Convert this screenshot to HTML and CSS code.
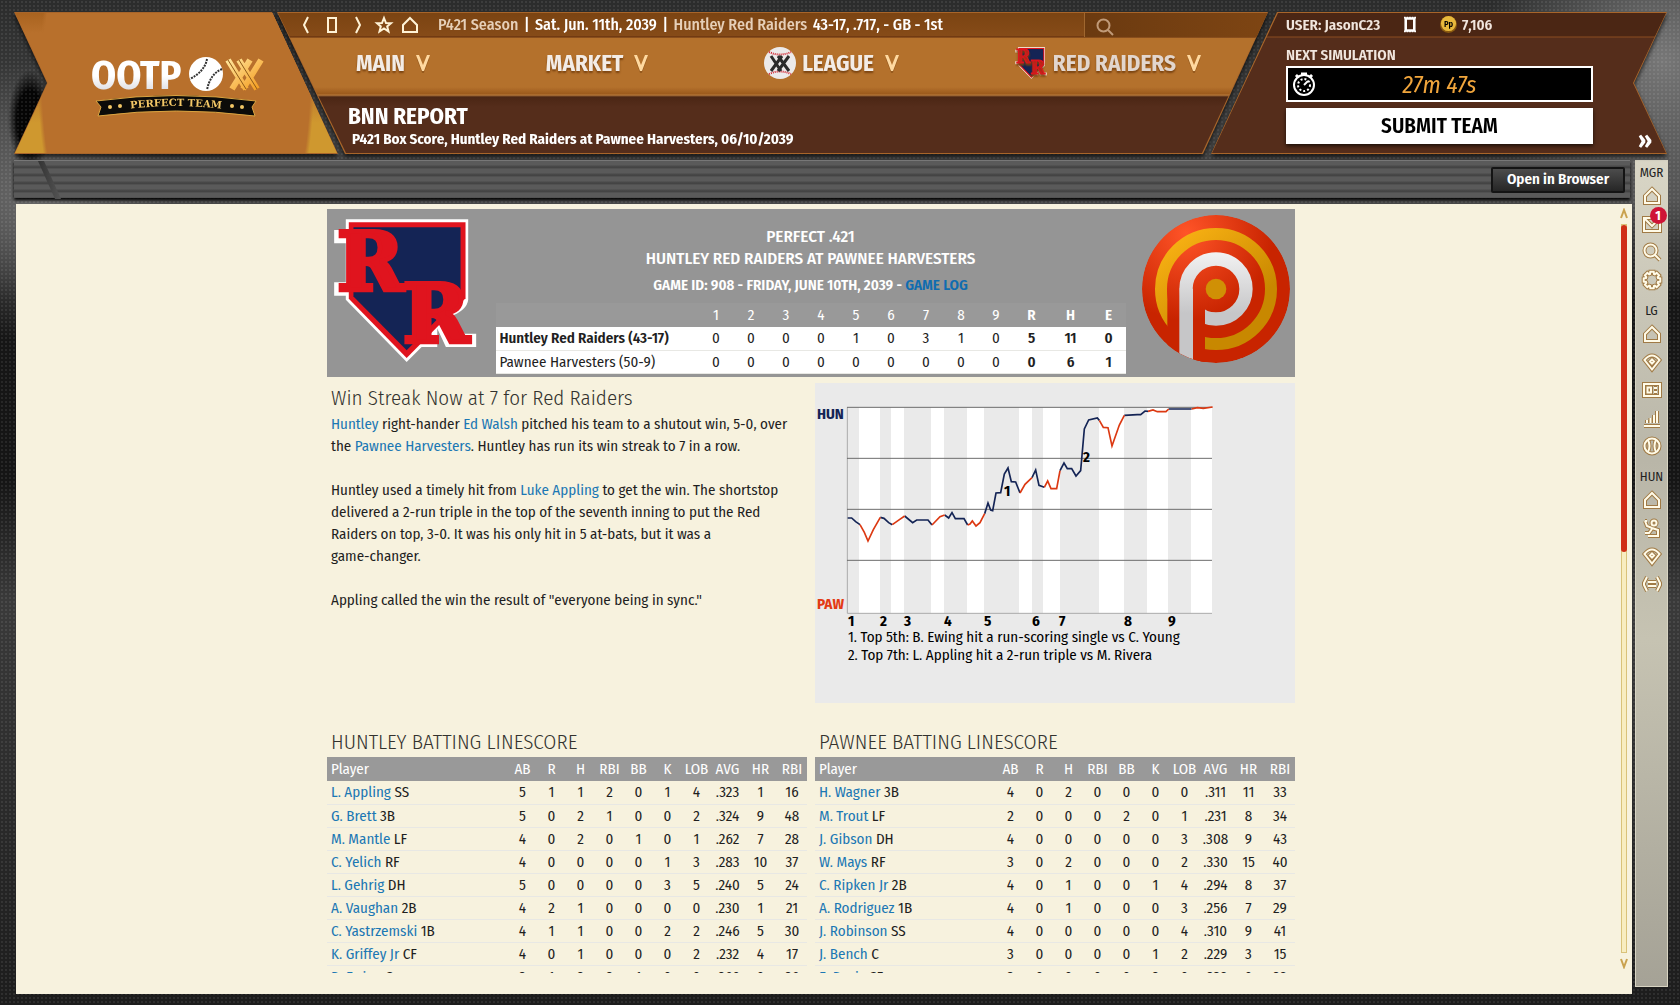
FILE: index.html
```
<!DOCTYPE html>
<html lang="en">
<head>
  <meta charset="UTF-8">
  <meta name="viewport" content="width=device-width, initial-scale=1.0">
  <title>BNN Report - P421 Box Score</title>
  <link rel="stylesheet" href="styles.css">
</head>
<body>
  <!-- Shared icons -->
  <svg class="sprite" aria-hidden="true">
    <symbol id="i-home" viewBox="0 0 20 20"><path d="M10 3 L17 10 V17 H3 V10 Z"/></symbol>
    <symbol id="i-mail" viewBox="0 0 20 20"><path d="M2 4 H18 V17 H2 Z M3 5 L10 12 L17 5"/></symbol>
    <symbol id="i-search" viewBox="0 0 20 20"><circle cx="8.500" cy="8.500" r="6"/><path d="M13 13 L18 18"/></symbol>
    <symbol id="i-gear" viewBox="0 0 20 20"><path d="M8 4 L8.300 1.700 H11.700 L12 4 L12.800 4.300 L14.700 2.900 L17.100 5.300 L15.700 7.200 L16 8 L18.300 8.300 V11.700 L16 12 L15.700 12.800 L17.100 14.700 L14.700 17.100 L12.800 15.700 L12 16 L11.700 18.300 H8.300 L8 16 L7.200 15.700 L5.300 17.100 L2.900 14.700 L4.300 12.800 L4 12 L1.700 11.700 V8.300 L4 8 L4.300 7.200 L2.900 5.300 L5.300 2.900 L7.200 4.300 Z"/></symbol>
    <symbol id="i-field" viewBox="0 0 20 20"><path d="M2.500 8 Q10 -1 17.500 8 L10 17.500 Z M10 7.500 L12 9.500 L10 11.500 L8 9.500 Z"/></symbol>
    <symbol id="i-card" viewBox="0 0 20 20"><path d="M2 4 H18 V16 H2 Z M5.500 7.500 H9 V12.500 H5.500 Z M12 8 H15 M12 12 H15"/></symbol>
    <symbol id="i-bars" viewBox="0 0 20 20"><path d="M2 18 H18 M5 15 V12 M8.500 15 V10 M12 15 V7 M15 15 V3"/></symbol>
    <symbol id="i-ball" viewBox="0 0 20 20"><circle cx="10" cy="10" r="7.500"/><path d="M6 4 Q9 10 6 16 M14 4 Q11 10 14 16"/></symbol>
    <symbol id="i-pitcher" viewBox="0 0 20 20"><circle cx="12" cy="5" r="2.500"/><path d="M3 3 L5 8 L10 10 L16 12 V18 H6 M10 11 L7 15 H3 M3 3 H5"/></symbol>
    <symbol id="i-bats" viewBox="0 0 20 20"><path d="M5 3 L2 9 V11 L5 17 M15 3 L18 9 V11 L15 17 M6 8 H14 M6 12 H14"/></symbol>
    <symbol id="i-star" viewBox="0 0 20 20"><path d="M10 3 L12 8 L17 8.200 L13.200 11.400 L14.500 16.500 L10 13.500 L5.500 16.500 L6.800 11.400 L3 8.200 L8 8 Z"/></symbol>
    <symbol id="i-down" viewBox="0 0 16 20">
      <path d="M3 5 L8 18 L13 5" fill="none" stroke="#7a4310" stroke-opacity=".5" stroke-width="3"/>
      <path d="M1 2 H4 L8 12 L12 2 H15 L9 18 H7 Z" fill="#ffd9a0"/>
    </symbol>
    <symbol id="logo-rr" viewBox="36 54 434 436">
      <path fill="#fff" d="M75 58 H443 V300 Q440 332 386 352 L432 402 H467 V442 H376 L350 386 V442 H303 L258 487 L75 300 V288 H40 V247 H75 V130 H40 V90 H75 Z"/>
      <path d="M84 67 H435 V295 L258 475 L84 297 Z" fill="#e0141e"/>
      <path d="M98 82 H420 V288 L258 452 L98 290 Z" fill="#142455"/>
      <g fill="#e0141e" stroke="#e0141e" stroke-width="14">
        <text x="49" y="272" font-size="240">R</text>
        <text x="247" y="427" font-size="240">R</text>
      </g>
    </symbol>
  </svg>

  <header class="masthead">
    <div class="panel panel-logo">
      <svg class="brand" viewBox="0 0 180 64" role="img" aria-label="OOTP Perfect Team">
        <defs>
          <linearGradient id="silver" x1="0" y1="0" x2="0" y2="1"><stop offset=".5" stop-color="#fff"/><stop offset="1" stop-color="#c9c9d0"/></linearGradient>
          <linearGradient id="gold" x1="0" y1="0" x2="1" y2="1"><stop offset="0" stop-color="#ffe49a"/><stop offset="1" stop-color="#f49a1c"/></linearGradient>
          <path id="ribbon-line" d="M30 56 Q86 48 142 56"/>
        </defs>
        <text class="brand-name" x="1" y="35" fill="url(#silver)">OOTP</text>
        <circle cx="116" cy="20" r="17" fill="#fff"/>
        <path d="M117 5 Q115 17 100 25 M132 15 Q120 20 117 36" fill="none" stroke="#333" stroke-width="2" stroke-dasharray="2 1"/>
        <path d="M138 6 L156 35 M149 6 L167 35 M160 6 L142 35 M171 6 L153 35" fill="none" stroke="url(#gold)" stroke-width="6"/>
        <path d="M138 6 L156 35 M149 6 L167 35" fill="none" stroke="#8f5a18" stroke-width="1"/>
        <path d="M6 47 Q86 36 166 47 L162 53 L165 62 Q86 52 8 62 L11 53 Z" fill="#0c0b09" stroke="#d9a441" stroke-width="1"/>
        <text class="brand-tag"><textPath href="#ribbon-line" startOffset="50%" text-anchor="middle">PERFECT TEAM</textPath></text>
        <g fill="#f3c766"><circle cx="20" cy="53" r="2"/><circle cx="30" cy="52" r="2"/><circle cx="142" cy="52" r="2"/><circle cx="152" cy="53" r="2"/></g>
      </svg>
    </div>

    <div class="panel panel-main">
      <div class="top-line">
        <div class="history">
          <button aria-label="Back"><svg viewBox="0 0 20 20"><path d="M12 2 L8 10 L12 18"/></svg></button>
          <button aria-label="Page"><svg viewBox="0 0 20 20"><path d="M6 3 H14 V17 H6 Z"/></svg></button>
          <button aria-label="Forward"><svg viewBox="0 0 20 20"><path d="M8 2 L12 10 L8 18"/></svg></button>
          <button aria-label="Favorites"><svg><use href="#i-star"/></svg></button>
          <button aria-label="Home"><svg><use href="#i-home"/></svg></button>
        </div>
        <p class="season">
          <span class="muted">P421 Season</span> <span class="bar">|</span> Sat. Jun. 11th, 2039 <span class="bar">|</span>
          <span class="muted team">Huntley Red Raiders</span> 43-17, .717, - GB - 1st
        </p>
        <label class="search">
          <svg><use href="#i-search"/></svg>
          <input type="search" aria-label="Search">
        </label>
      </div>
      <nav class="main-nav">
        <a href="#">MAIN <svg class="down"><use href="#i-down"/></svg></a>
        <a href="#">MARKET <svg class="down"><use href="#i-down"/></svg></a>
        <a href="#">
          <svg class="nav-logo" viewBox="0 0 32 32">
            <circle cx="16" cy="16" r="16" fill="#eceaea"/>
            <path d="M5 5 Q16 10 27 5 M5 27 Q16 22 27 27" fill="none" stroke="#d2232f" stroke-width="2" stroke-dasharray="1 1"/>
            <path d="M7 9 L17 24 M14 9 L25 24 M25 9 L14 24 M18 9 L7 24" stroke="#2b2b2b" stroke-width="3"/>
          </svg>
          LEAGUE <svg class="down"><use href="#i-down"/></svg>
        </a>
        <a href="#" class="dim"><svg class="nav-logo"><use href="#logo-rr"/></svg> RED RAIDERS <svg class="down"><use href="#i-down"/></svg></a>
      </nav>
      <div class="page-title">
        <h1>BNN REPORT</h1>
        <p>P421 Box Score, Huntley Red Raiders at Pawnee Harvesters, 06/10/2039</p>
      </div>
    </div>

    <div class="panel panel-user">
      <div class="user-line">
        <span class="user-name">USER: JasonC23</span>
        <svg class="pack" viewBox="0 0 14 18"><path d="M2 2 H12 V16 H2 Z" fill="none" stroke="#fff" stroke-width="3"/><path d="M0 1 H14 M0 17 H14" stroke="#fff" stroke-width="2" stroke-dasharray="2 1"/></svg>
        <svg class="coin" viewBox="0 0 18 18"><circle cx="9" cy="9" r="9" fill="#8a5a10"/><circle cx="9" cy="8" r="8" fill="#e9b93c"/><text x="9" y="12" text-anchor="middle">Pp</text></svg>
        <span>7,106</span>
      </div>
      <p class="next">NEXT SIMULATION</p>
      <div class="timer">
        <svg viewBox="0 0 24 24">
          <circle cx="12" cy="13" r="10" fill="none" stroke="#fff" stroke-width="2"/>
          <path d="M9 2 H15 M4 5 L6 3 M20 5 L18 3" stroke="#fff" stroke-width="3"/>
          <circle cx="12" cy="13" r="6" fill="none" stroke="#fff" stroke-width="2" stroke-dasharray="2 2"/>
          <path d="M12 13 L16 9" stroke="#fff" stroke-width="2"/>
        </svg>
        <span>27m 47s</span>
      </div>
      <button class="submit">SUBMIT TEAM</button>
      <button class="more" aria-label="More">»</button>
    </div>
  </header>

  <div class="workspace">
    <div class="column">
      <div class="toolbar">
        <button class="open-btn">Open in Browser</button>
      </div>

      <main class="sheet">
        <div class="report">
          <section class="scoreboard">
            <svg class="crest"><use href="#logo-rr"/></svg>
            <div class="score-mid">
              <h2>PERFECT .421</h2>
              <h2>HUNTLEY RED RAIDERS AT PAWNEE HARVESTERS</h2>
              <h3>GAME ID: 908 - FRIDAY, JUNE 10TH, 2039 - <a href="#">GAME LOG</a></h3>
              <table class="line">
                <colgroup><col><col class="inn" span="9"><col class="c-r"><col class="c-h"><col class="c-e"></colgroup>
                <thead>
                  <tr><th></th><th>1</th><th>2</th><th>3</th><th>4</th><th>5</th><th>6</th><th>7</th><th>8</th><th>9</th><th class="b">R</th><th class="b">H</th><th class="b">E</th></tr>
                </thead>
                <tbody>
                  <tr><td class="b">Huntley Red Raiders (43-17)</td><td>0</td><td>0</td><td>0</td><td>0</td><td>1</td><td>0</td><td>3</td><td>1</td><td>0</td><td class="b">5</td><td class="b">11</td><td class="b">0</td></tr>
                  <tr><td>Pawnee Harvesters (50-9)</td><td>0</td><td>0</td><td>0</td><td>0</td><td>0</td><td>0</td><td>0</td><td>0</td><td>0</td><td class="b">0</td><td class="b">6</td><td class="b">1</td></tr>
                </tbody>
              </table>
            </div>
            <svg class="crest-p" viewBox="1026 45 444 444">
              <defs>
                <radialGradient id="pred" gradientUnits="userSpaceOnUse" cx="1159" cy="100" r="260"><stop offset="0" stop-color="#ff5428"/><stop offset="1" stop-color="#c82400"/></radialGradient>
                <linearGradient id="pyel" gradientUnits="userSpaceOnUse" x1="1100" y1="90" x2="1300" y2="350"><stop offset="0" stop-color="#fdb515"/><stop offset="1" stop-color="#c88800"/></linearGradient>
                <linearGradient id="pwht" gradientUnits="userSpaceOnUse" x1="0" y1="157" x2="0" y2="340"><stop offset="0" stop-color="#f2f2f2"/><stop offset="1" stop-color="#c6c6c8"/></linearGradient>
                <clipPath id="pclip"><circle cx="1248" cy="267" r="222"/></clipPath>
              </defs>
              <g clip-path="url(#pclip)">
                <circle cx="1248" cy="267" r="222" fill="url(#pred)"/>
                <circle cx="1248" cy="267" r="165" fill="none" stroke="url(#pyel)" stroke-width="36"/>
                <rect x="1102" y="267" width="113" height="222" fill="url(#pred)"/>
                <circle cx="1248" cy="267" r="90" fill="none" stroke="url(#pwht)" stroke-width="40"/>
                <rect x="1138" y="267" width="77" height="222" fill="url(#pred)"/>
                <rect x="1138" y="266" width="41" height="223" fill="url(#pwht)"/>
                <circle cx="1248" cy="267" r="31" fill="#d09005"/>
              </g>
            </svg>
          </section>

          <div class="two-col">
            <article class="story">
              <h4>Win Streak Now at 7 for Red Raiders</h4>
              <p><a href="#">Huntley</a> right-hander <a href="#">Ed Walsh</a> pitched his team to a shutout win, 5-0, over<br>the <a href="#">Pawnee Harvesters</a>. Huntley has run its win streak to 7 in a row.</p>
              <p>Huntley used a timely hit from <a href="#">Luke Appling</a> to get the win. The shortstop<br>delivered a 2-run triple in the top of the seventh inning to put the Red<br>Raiders on top, 3-0. It was his only hit in 5 at-bats, but it was a<br>game-changer.</p>
              <p>Appling called the win the result of "everyone being in sync."</p>
            </article>

            <!-- Win probability chart -->
            <svg class="chart" viewBox="0 0 480 320">
              <g transform="translate(-5 -8) scale(.33333)">
                <path fill="#fff" d="M147 97h63v618h-63z M243 97h39v618h-39z M363 97h39v618h-39z M471 97h51v618h-51z M627 97h39v618h-39z M699 97h51v618h-51z M867 97h75v618h-75z M1011 97h63v618h-63z M1143 97h63v618h-63z"/>
                <path d="M112 97 V715 H1206" fill="none" stroke="#aaa" stroke-width="3"/>
                <path d="M111 97 H1206 M111 250 H1206 M111 403 H1206 M111 556 H1206" fill="none" stroke="#6b6b6b" stroke-width="3"/>
                <path class="hun-line" d="M113 429 L125 429 137 440 150 449 M211 427 L222 430 236 443 247 449 M284 423 L308 443 320 435 354 435 366 450 M404 420 L416 429 426 413 436 431 462 431 473 450 M524 416 L534 384 542 405 548 407 558 354 572 353 583 297 594 279 604 320 617 321 630 354 M666 308 L677 285 687 331 703 337 M750 287 L762 264 772 281 785 281 798 303 812 287 823 162 836 135 862 129 868 136 M943 121 L982 119 992 119 1005 108 1014 109 M1076 102 L1145 102"/>
                <path class="paw-line" d="M150 449 L163 472 174 498 190 464 211 427 M247 449 L265 436 284 423 M366 450 L390 425 404 420 M473 450 L480 447 487 438 498 453 510 443 524 416 M630 354 L645 328 666 308 M703 337 L713 318 723 341 740 341 750 287 M868 136 L880 157 894 158 906 213 928 150 943 121 M1014 109 L1029 105 1042 110 1068 110 1076 102 M1145 102 L1162 98 1180 100 1208 96"/>
              </g>
              <g class="chart-bold">
                <text x="2" y="36" class="hun">HUN</text>
                <text x="2" y="226" class="paw">PAW</text>
                <text x="189" y="113">1</text>
                <text x="268" y="79">2</text>
                <text x="33" y="243">1</text>
                <text x="65" y="243">2</text>
                <text x="89" y="243">3</text>
                <text x="129" y="243">4</text>
                <text x="169" y="243">5</text>
                <text x="217" y="243">6</text>
                <text x="244" y="243">7</text>
                <text x="309" y="243">8</text>
                <text x="353" y="243">9</text>
              </g>
              <text x="33" y="259">1. Top 5th: B. Ewing hit a run-scoring single vs C. Young</text>
              <text x="33" y="277">2. Top 7th: L. Appling hit a 2-run triple vs M. Rivera</text>
            </svg>
          </div>

          <div class="two-col batting">
            <section>
              <h4>HUNTLEY BATTING LINESCORE</h4>
              <table class="bat">
                <colgroup><col><col class="n" span="7"><col class="w" span="2"><col class="n2"></colgroup>
                <thead>
                  <tr><th>Player</th><th>AB</th><th>R</th><th>H</th><th>RBI</th><th>BB</th><th>K</th><th>LOB</th><th>AVG</th><th>HR</th><th>RBI</th></tr>
                </thead>
                <tbody>
                  <tr><td><a href="#">L. Appling</a> SS</td><td>5</td><td>1</td><td>1</td><td>2</td><td>0</td><td>1</td><td>4</td><td>.323</td><td>1</td><td>16</td></tr>
                  <tr><td><a href="#">G. Brett</a> 3B</td><td>5</td><td>0</td><td>2</td><td>1</td><td>0</td><td>0</td><td>2</td><td>.324</td><td>9</td><td>48</td></tr>
                  <tr><td><a href="#">M. Mantle</a> LF</td><td>4</td><td>0</td><td>2</td><td>0</td><td>1</td><td>0</td><td>1</td><td>.262</td><td>7</td><td>28</td></tr>
                  <tr><td><a href="#">C. Yelich</a> RF</td><td>4</td><td>0</td><td>0</td><td>0</td><td>0</td><td>1</td><td>3</td><td>.283</td><td>10</td><td>37</td></tr>
                  <tr><td><a href="#">L. Gehrig</a> DH</td><td>5</td><td>0</td><td>0</td><td>0</td><td>0</td><td>3</td><td>5</td><td>.240</td><td>5</td><td>24</td></tr>
                  <tr><td><a href="#">A. Vaughan</a> 2B</td><td>4</td><td>2</td><td>1</td><td>0</td><td>0</td><td>0</td><td>0</td><td>.230</td><td>1</td><td>21</td></tr>
                  <tr><td><a href="#">C. Yastrzemski</a> 1B</td><td>4</td><td>1</td><td>1</td><td>0</td><td>0</td><td>2</td><td>2</td><td>.246</td><td>5</td><td>30</td></tr>
                  <tr><td><a href="#">K. Griffey Jr</a> CF</td><td>4</td><td>0</td><td>1</td><td>0</td><td>0</td><td>0</td><td>2</td><td>.232</td><td>4</td><td>17</td></tr>
                  <tr><td><a href="#">B. Ewing</a> C</td><td>3</td><td>1</td><td>2</td><td>2</td><td>1</td><td>0</td><td>0</td><td>.260</td><td>0</td><td>26</td></tr>
                </tbody>
              </table>
            </section>
            <section>
              <h4>PAWNEE BATTING LINESCORE</h4>
              <table class="bat">
                <colgroup><col><col class="n" span="7"><col class="w" span="2"><col class="n2"></colgroup>
                <thead>
                  <tr><th>Player</th><th>AB</th><th>R</th><th>H</th><th>RBI</th><th>BB</th><th>K</th><th>LOB</th><th>AVG</th><th>HR</th><th>RBI</th></tr>
                </thead>
                <tbody>
                  <tr><td><a href="#">H. Wagner</a> 3B</td><td>4</td><td>0</td><td>2</td><td>0</td><td>0</td><td>0</td><td>0</td><td>.311</td><td>11</td><td>33</td></tr>
                  <tr><td><a href="#">M. Trout</a> LF</td><td>2</td><td>0</td><td>0</td><td>0</td><td>2</td><td>0</td><td>1</td><td>.231</td><td>8</td><td>34</td></tr>
                  <tr><td><a href="#">J. Gibson</a> DH</td><td>4</td><td>0</td><td>0</td><td>0</td><td>0</td><td>0</td><td>3</td><td>.308</td><td>9</td><td>43</td></tr>
                  <tr><td><a href="#">W. Mays</a> RF</td><td>3</td><td>0</td><td>2</td><td>0</td><td>0</td><td>0</td><td>2</td><td>.330</td><td>15</td><td>40</td></tr>
                  <tr><td><a href="#">C. Ripken Jr</a> 2B</td><td>4</td><td>0</td><td>1</td><td>0</td><td>0</td><td>1</td><td>4</td><td>.294</td><td>8</td><td>37</td></tr>
                  <tr><td><a href="#">A. Rodriguez</a> 1B</td><td>4</td><td>0</td><td>1</td><td>0</td><td>0</td><td>0</td><td>3</td><td>.256</td><td>7</td><td>29</td></tr>
                  <tr><td><a href="#">J. Robinson</a> SS</td><td>4</td><td>0</td><td>0</td><td>0</td><td>0</td><td>0</td><td>4</td><td>.310</td><td>9</td><td>41</td></tr>
                  <tr><td><a href="#">J. Bench</a> C</td><td>3</td><td>0</td><td>0</td><td>0</td><td>0</td><td>1</td><td>2</td><td>.229</td><td>3</td><td>15</td></tr>
                  <tr><td><a href="#">E. Davis</a> CF</td><td>3</td><td>0</td><td>0</td><td>0</td><td>0</td><td>2</td><td>0</td><td>.238</td><td>0</td><td>28</td></tr>
                </tbody>
              </table>
            </section>
          </div>
        </div>

        <div class="scroller">
          <svg viewBox="0 0 8 12"><path d="M1 10 L4 2 L7 10"/></svg>
          <div class="track"><div class="thumb"></div></div>
          <svg viewBox="0 0 8 12"><path d="M1 2 L4 10 L7 2"/></svg>
        </div>
      </main>
    </div>

    <nav class="side">
      <h5>MGR</h5>
      <a href="#" aria-label="Manager home"><svg><use class="edge" href="#i-home"/><use href="#i-home"/></svg></a>
      <a href="#" aria-label="Inbox"><svg><use class="edge" href="#i-mail"/><use href="#i-mail"/></svg><span class="badge">1</span></a>
      <a href="#" aria-label="Search"><svg><use class="edge" href="#i-search"/><use href="#i-search"/></svg></a>
      <a href="#" aria-label="Settings"><svg><use class="edge" href="#i-gear"/><use href="#i-gear"/></svg></a>
      <h5>LG</h5>
      <a href="#" aria-label="League home"><svg><use class="edge" href="#i-home"/><use href="#i-home"/></svg></a>
      <a href="#" aria-label="Scores"><svg><use class="edge" href="#i-field"/><use href="#i-field"/></svg></a>
      <a href="#" aria-label="Standings"><svg><use class="edge" href="#i-card"/><use href="#i-card"/></svg></a>
      <a href="#" aria-label="Statistics"><svg><use class="edge" href="#i-bars"/><use href="#i-bars"/></svg></a>
      <a href="#" aria-label="Games"><svg><use class="edge" href="#i-ball"/><use href="#i-ball"/></svg></a>
      <h5>HUN</h5>
      <a href="#" aria-label="Team home"><svg><use class="edge" href="#i-home"/><use href="#i-home"/></svg></a>
      <a href="#" aria-label="Pitching"><svg><use class="edge" href="#i-pitcher"/><use href="#i-pitcher"/></svg></a>
      <a href="#" aria-label="Lineup"><svg><use class="edge" href="#i-field"/><use href="#i-field"/></svg></a>
      <a href="#" aria-label="Transactions"><svg><use class="edge" href="#i-bats"/><use href="#i-bats"/></svg></a>
    </nav>
  </div>
</body>
</html>
```
FILE: styles.css
```
* {
  margin: 0;
  padding: 0;
  box-sizing: border-box;
}

body {
  font-family: "Fira Sans Condensed", "Liberation Sans Narrow", Roboto, sans-serif;
  font-size: 15px;
  line-height: 22px;
  color: #1f1f1f;
  height: 100vh;
  overflow: hidden;
  display: flex;
  flex-direction: column;
  background:
    radial-gradient(#ffffff14 1px, transparent 1px) 0 0 / 4px 4px,
    radial-gradient(ellipse 22px 50px at 30px 120px, #050505 60%, transparent),
    radial-gradient(circle at 2% 20%, #666 0, transparent 140px),
    radial-gradient(circle at 99% 6%, #777 0, transparent 180px),
    linear-gradient(#2b2c2c 0, #4a4a4a 200px, #161616 300px, #151515 480px, #3a3a3a 600px, #1c1c1c);
}

a {
  color: #1c78b4;
  text-decoration: none;
}

a:hover {
  text-decoration: underline;
}

button {
  font: inherit;
  border: none;
  background: none;
  cursor: pointer;
}

.sprite {
  position: absolute;
  width: 0;
  height: 0;
}

symbol {
  overflow: visible;
}

symbol text {
  font-family: "DejaVu Serif", serif;
  font-weight: bold;
}

/* Masthead */
.masthead {
  display: flex;
  height: 154px;
  padding: 12px 13px 0 14px;
  filter: drop-shadow(0 3px 2px #000a);
}

.panel {
  position: relative;
  clip-path: var(--shape);
  background: #a8652a;
}

.panel::before {
  content: "";
  position: absolute;
  inset: 1px;
  z-index: -1;
  clip-path: var(--shape);
}

.panel-logo {
  --shape: polygon(0 0, 258px 0, 100% 100%, 0 100%, 33px 50%);
  flex: 0 0 324px;
  padding: 42px 0 0 76px;
}

.panel-logo::before {
  background:
    radial-gradient(ellipse 138px 260px at 50% 50%, #b8702c 97%, transparent 100%),
    linear-gradient(#a9631f 0, #b8702c 20px, #b8702c 70px, #cf982f 110px);
}

.brand {
  display: block;
  width: 180px;
  height: 64px;
}

.brand-name {
  font-size: 40px;
  font-weight: bold;
}

.brand-tag {
  font: bold 10px "DejaVu Serif", serif;
  fill: #f3c766;
}

.panel-main {
  --shape: polygon(0 0, 100% 0, calc(100% - 65px) 100%, 68px 100%);
  flex: 1;
  margin-left: -61px;
  color: #fff;
}

.panel-main::before {
  background: linear-gradient(#7b4412 0, #864b18 23px, #5d2a0c 24px, #b4712c 25px, #b4712c 74px, #9c5a1c 81px, #b97b3c 82px, #4b2614 84px, #552d1b 94px, #552d1b);
}

.top-line {
  display: flex;
  height: 25px;
  align-items: center;
  padding-left: 19px;
  font-size: 15px;
}

.history {
  display: flex;
  gap: 6px;
}

.history button {
  width: 20px;
  height: 20px;
}

.history svg,
.search svg {
  width: 20px;
  height: 20px;
  fill: none;
  stroke: #fff3d6;
  stroke-width: 2;
}

.season {
  flex: 1;
  margin-left: 18px;
  color: #fff;
  font-size: 16px;
  font-weight: 500;
  white-space: nowrap;
}

.muted {
  color: #e6cfb8;
}

.bar {
  margin: 0 2px;
}

.team {
  margin-right: 2px;
}

.search {
  display: flex;
  width: 184px;
  height: 24px;
  padding: 4px 0 0 10px;
  border-left: 1px solid #a0672f;
  background: linear-gradient(90deg, #6b3a10, #7e4513);
}

.search svg {
  stroke: #c09a78;
}

.search input {
  width: 100px;
  border: none;
  outline: none;
  background: none;
  color: #fff;
}

.main-nav {
  display: flex;
  height: 58px;
  align-items: center;
  justify-content: space-between;
  padding: 0 66px 6px 79px;
}

.main-nav a {
  display: flex;
  align-items: center;
  gap: 6px;
  font-size: 23px;
  font-weight: bold;
  color: #f3ece6;
  text-shadow: 0 2px 2px #7a4310;
}

.main-nav .dim {
  color: #e2d6ce;
}

.nav-logo {
  width: 32px;
  height: 32px;
}

.down {
  width: 16px;
  height: 20px;
  margin-left: 4px;
}

.page-title {
  padding: 9px 0 0 71px;
}

.page-title h1 {
  font-size: 23px;
  line-height: 24px;
}

.page-title p {
  font-size: 15px;
  font-weight: bold;
  padding-left: 4px;
}

.panel-user {
  --shape: polygon(66px 0, 100% 0, calc(100% - 33px) 50%, 100% 100%, 0 100%);
  flex: 0 0 456px;
  margin-left: -57px;
  padding: 0 74px 0 75px;
  color: #f1e6de;
}

.panel-user::before {
  background: linear-gradient(#4b2614 0, #4b2614 23px, #8b4c20 24px, #552d1b 25px, #552d1b);
}

.user-line {
  display: flex;
  height: 25px;
  align-items: center;
  font-size: 15px;
  font-weight: 600;
}

.user-name {
  width: 118px;
}

.pack {
  width: 12px;
  height: 17px;
}

.coin {
  width: 17px;
  height: 17px;
  margin: 0 5px 0 24px;
  font-size: 9px;
}

.next {
  height: 29px;
  padding-top: 7px;
  font-size: 15px;
  font-weight: 600;
}

.timer {
  position: relative;
  height: 36px;
  border: 2px solid #fff;
  background: #000;
  color: #f0a53c;
  font-size: 24px;
  font-style: italic;
  line-height: 34px;
  text-align: center;
}

.timer svg {
  position: absolute;
  left: 4px;
  top: 4px;
  width: 24px;
  height: 24px;
}

.submit {
  display: block;
  width: 100%;
  height: 36px;
  margin-top: 6px;
  background: #fff;
  color: #000;
  font-size: 21px;
  font-weight: 600;
  box-shadow: 0 2px 4px #000a;
}

.more {
  position: absolute;
  right: 15px;
  bottom: 3px;
  color: #fff;
  font-size: 24px;
  font-weight: bold;
}

/* Workspace */
.workspace {
  flex: 1;
  min-height: 0;
  display: flex;
  gap: 3px;
  padding: 6px 12px 0 14px;
}

.column {
  flex: 1;
  display: flex;
  flex-direction: column;
  padding-bottom: 11px;
}

.toolbar {
  position: relative;
  display: flex;
  justify-content: flex-end;
  align-items: center;
  height: 38px;
  margin: 0 2px 6px 0;
  padding: 0 5px;
  background: repeating-linear-gradient(#5a5a5a 0, #5a5a5a 4px, #494949 5px, #424242 7px, #606060 8px);
  border-top: 1px solid #777;
  box-shadow: 0 2px 3px #000;
}

.toolbar::before {
  content: "";
  position: absolute;
  left: 24px;
  top: 0;
  width: 23px;
  height: 38px;
  background: linear-gradient(90deg, #333, #555);
  clip-path: polygon(0 0, 6px 0, 100% 100%, 17px 100%);
}

.open-btn {
  width: 134px;
  height: 26px;
  padding-bottom: 2px;
  border: 2px solid #141414;
  border-radius: 2px;
  background: linear-gradient(#4c4c4c, #262626);
  color: #fff;
  font-size: 15px;
  font-weight: 600;
  line-height: 18px;
}

.sheet {
  flex: 1;
  min-height: 0;
  display: flex;
  margin-left: 2px;
  padding-bottom: 21px;
  background: #f7f2de;
}

.report {
  flex: 1;
  min-width: 0;
  overflow: hidden;
  padding-top: 5px;
}

.report > * {
  width: 968px;
  max-width: 100%;
  margin: 0 auto;
}

.scroller {
  display: flex;
  flex-direction: column;
  align-items: center;
  width: 26px;
  padding: 4px 0 4px 9px;
}

.scroller svg {
  width: 8px;
  height: 12px;
  fill: none;
  stroke: #c9a24f;
  stroke-width: 2;
}

.track {
  flex: 1;
  width: 6px;
  margin: 4px 0;
  border: 1px solid #d9c27a;
  background: #f8edc0;
}

.thumb {
  width: 6px;
  height: 45%;
  margin-left: -1px;
  border-radius: 3px;
  background: #cf2e17;
}

/* Scoreboard */
.scoreboard {
  display: flex;
  justify-content: space-between;
  height: 168px;
  padding: 0 5px 0 4px;
  background: #959595;
  color: #fff;
}

.crest {
  width: 148px;
  height: 145px;
  margin-top: 9px;
}

.crest-p {
  width: 148px;
  height: 148px;
  margin-top: 6px;
}

.score-mid {
  width: 630px;
  padding-top: 17px;
  text-align: center;
}

.score-mid h2 {
  font-size: 17px;
  font-weight: 500;
  line-height: 22px;
}

.score-mid h3 {
  font-size: 15px;
  font-weight: 600;
  line-height: 30px;
  margin-bottom: 3px;
}

.score-mid h3 a {
  color: #0f6cb0;
}

table {
  width: 100%;
  border-collapse: collapse;
  table-layout: fixed;
}

th {
  height: 24px;
  background: #999;
  color: #fff;
  font-weight: normal;
  text-align: center;
}

td {
  height: 23px;
  border-bottom: 1px solid #e8e8e4;
  text-align: center;
}

th:first-child,
td:first-child {
  padding-left: 4px;
  text-align: left;
  white-space: nowrap;
}

.line td {
  background: #fff;
  color: #1f1f1f;
}

.b,
.line .b {
  font-weight: 600;
}

.inn {
  width: 35px;
}

.c-r {
  width: 36px;
}

.c-h {
  width: 42px;
}

.c-e {
  width: 34px;
}

/* Story and chart */
.two-col {
  display: grid;
  grid-template-columns: minmax(0, 1fr) minmax(0, 1fr);
  gap: 8px;
  padding-top: 6px;
}

h4 {
  font-size: 21px;
  font-weight: 300;
  line-height: 30px;
  color: #33322e;
}

.story {
  padding-left: 4px;
  white-space: nowrap;
}

.story p {
  margin-bottom: 22px;
}

.chart {
  display: block;
  width: 100%;
  background: #eaeaea;
  font-size: 15px;
}

.chart-bold {
  font-size: 15px;
  font-weight: bold;
}

.hun {
  fill: #142455;
}

.paw {
  fill: #e33a14;
}

.hun-line,
.paw-line {
  fill: none;
  stroke: #142455;
  stroke-width: 5;
}

.paw-line {
  stroke: #dc3912;
}

.batting {
  padding-top: 24px;
}

.batting h4 {
  padding-left: 4px;
}

.n {
  width: 29px;
}

.w {
  width: 33px;
}

.n2 {
  width: 30px;
}

/* Side navigation */
.side {
  display: flex;
  flex-direction: column;
  align-items: center;
  width: 33px;
  margin-bottom: 18px;
  padding-top: 4px;
  border: 1px solid #d8d4c2;
  border-top: none;
  background: linear-gradient(#d9d6c6, #b9b6a8 300px, #c6c3b2 480px, #a5a296);
}

.side h5 {
  font-size: 13px;
  font-weight: normal;
  line-height: 18px;
}

.side a + h5 {
  margin-top: 8px;
}

.side a {
  position: relative;
  display: flex;
  align-items: center;
  height: 28px;
}

.side svg {
  width: 20px;
  height: 20px;
  overflow: visible;
  fill: none;
  stroke: #fffbe8;
  stroke-width: 2;
}

.side .edge {
  stroke: #a07a45;
  stroke-width: 4;
}

.badge {
  position: absolute;
  left: 8px;
  top: -3px;
  width: 17px;
  height: 17px;
  border-radius: 50%;
  background: #cf1436;
  color: #fff;
  font-size: 13px;
  font-weight: bold;
  line-height: 17px;
  text-align: center;
}
```
